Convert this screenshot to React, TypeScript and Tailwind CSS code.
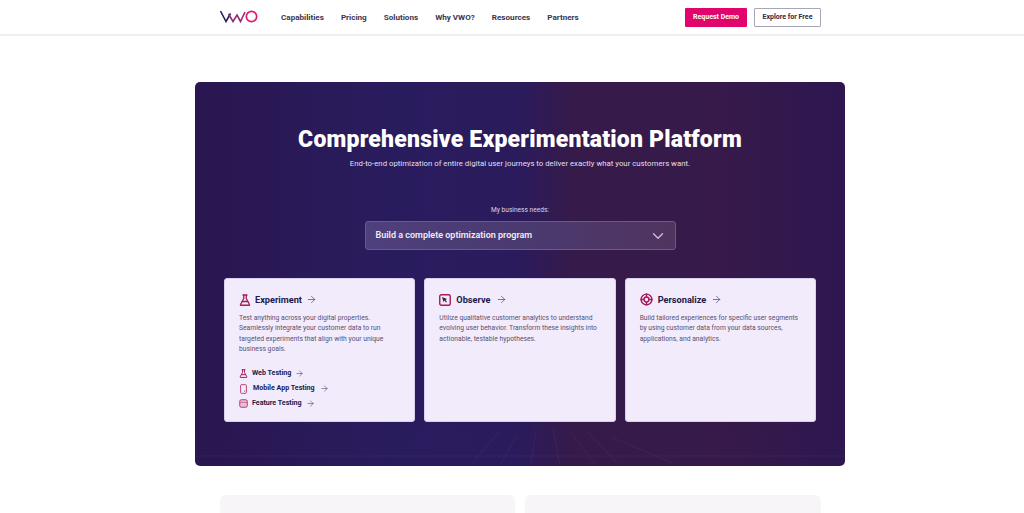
import React from 'react';
import { ArrowRight, ChevronDown } from 'lucide-react';

const navItems = ['Capabilities', 'Pricing', 'Solutions', 'Why VWO?', 'Resources', 'Partners'];

const Flask = ({ size = 12 }: { size?: number }) => (
  <svg width={size} height={size} viewBox="0 0 24 24" fill="none" stroke="#a51c5c" strokeWidth="2.6" strokeLinejoin="round" strokeLinecap="round">
    <path d="M8 2h8M9.500 2v7L3 21a1 1 0 0 0 1 1.500h16a1 1 0 0 0 1-1.500L14.500 9V2" />
    <path d="M6.500 15h11" />
  </svg>
);

const ObserveIcon = () => (
  <svg width="12" height="12" viewBox="0 0 24 24" fill="#f6e9f2" stroke="#a51c5c" strokeWidth="2.800">
    <rect x="1.500" y="1.500" width="21" height="21" rx="3" />
    <path d="M6 6l10 4-3 2 3 4-2 1-3-4-2 3z" fill="#3b1c5c" stroke="none" />
  </svg>
);

const PersonalizeIcon = () => (
  <svg width="13" height="13" viewBox="0 0 24 24" fill="none" stroke="#a51c5c" strokeWidth="2.600">
    <circle cx="12" cy="12" r="10" />
    <circle cx="12" cy="12" r="4.500" />
    <path d="M12 1v7M12 16v7M1 12h7M16 12h7" />
  </svg>
);

const PhoneIcon = () => (
  <svg width="9" height="10" viewBox="0 0 18 24" fill="none" stroke="#b8386f" strokeWidth="2.200">
    <rect x="2" y="1.500" width="14" height="21" rx="2.500" />
    <path d="M11 17h2" stroke="#3b1c5c" />
  </svg>
);

const FeatureIcon = () => (
  <svg width="9" height="9" viewBox="0 0 24 24" fill="#e3c3d8" stroke="#b8386f" strokeWidth="2.600">
    <rect x="2" y="2" width="20" height="20" rx="4" />
    <path d="M2 9h20" strokeWidth="1.600" />
  </svg>
);

const Card = ({ icon, title, gap, text, children }: { icon: React.ReactNode; title: string; gap: string; text: string[]; children?: React.ReactNode }) => (
  <div className="h-[144px] rounded-[3px] bg-[#f1ebfc] border border-[#d9cfee] pl-[14px] pt-[14px]">
    <div className={`flex items-center h-[13px] ${gap}`}>
      {icon}
      <span className="text-[9.200px] font-bold text-[#221a4a]">{title}</span>
      <ArrowRight size={11} strokeWidth={1.400} className="text-[#3c3460]" />
    </div>
    <div className="mt-[7px] text-[6.750px] leading-[10.300px] text-[#5a5070]">
      {text.map((line) => (
        <div key={line} className="whitespace-nowrap">{line}</div>
      ))}
    </div>
    {children}
  </div>
);

const SubLink = ({ icon, label, gap }: { icon: React.ReactNode; label: string; gap: string }) => (
  <div className={`flex items-center h-[15px] ${gap}`}>
    <span className="w-[9px] flex justify-center">{icon}</span>
    <span className="text-[7.100px] font-bold text-[#221a4a] whitespace-nowrap">{label}</span>
    <ArrowRight size={9} strokeWidth={1.400} className="text-[#3c3460]" />
  </div>
);

export default function App() {
  return (
    <div className="h-[513px] overflow-hidden bg-white font-['Roboto','Noto_Sans',sans-serif]">
      <header className="h-[36px] border-b-2 border-[#efefef] bg-white">
        <div className="w-[601px] ml-[220px] h-full flex items-center">
          <svg width="38" height="13" viewBox="0 0 38 13" fill="none" strokeWidth="1.600" className="-mt-[2px]">
            <path d="M0.500 1L6 11.500L10.500 3.500" stroke="#2b1d5c" />
            <path d="M8.500 4L13 11.500L17 5L20.500 11.500L25 2" stroke="#8d2a72" />
            <circle cx="31.500" cy="6.500" r="5.200" stroke="#e01a76" strokeWidth="1.700" />
          </svg>
          <nav className="flex ml-[23px] gap-[17px] text-[8.100px] font-bold text-[#3a3650]">
            {navItems.map((item) => (
              <span key={item} className="whitespace-nowrap">{item}</span>
            ))}
          </nav>
          <div className="ml-auto flex items-center gap-[7px]">
            <div className="w-[62px] h-[19px] rounded-[1px] bg-[#e2046d] text-white text-[7px] font-bold flex items-center justify-center whitespace-nowrap">Request Demo</div>
            <div className="w-[67px] h-[19px] rounded-[1px] border border-[#a7a5b8] text-[#2c2848] text-[7px] font-bold flex items-center justify-center whitespace-nowrap">Explore for Free</div>
          </div>
        </div>
      </header>

      <main className="pt-[46px] flex flex-col items-center">
        <section className="relative w-[650px] h-[384px] ml-[16px] rounded-[5px] overflow-hidden bg-[linear-gradient(90deg,#2a1650_0%,#291c5e_30%,#2b1b5c_50%,#361a4a_58%,#371a4a_80%,#2e1650_100%)]">
          <svg className="absolute left-0 bottom-0" width="650" height="50" viewBox="0 0 650 50" fill="none" stroke="#ffffff" strokeOpacity="0.09" strokeWidth="0.500">
            <path d="M0 40h650" />
            <path d="M0 24h280M0 32h240M430 24h220M470 32h180" strokeOpacity="0.03" />
            <path d="M305 15L277 47M322 19L305 49M341 15L335 51M358 12L365 49M375 15L401 50M392 15L422 47M416 21L478 47" />
          </svg>
          <div className="relative flex flex-col items-center">
            <h1 className="mt-[44px] text-[23px] leading-[28px] font-black tracking-[0.2px] text-white whitespace-nowrap">Comprehensive Experimentation Platform</h1>
            <p className="mt-[4px] text-[7.800px] leading-[12px] text-[#e4dff0] whitespace-nowrap">End-to-end optimization of entire digital user journeys to deliver exactly what your customers want.</p>
            <p className="mt-[35px] text-[6.600px] leading-[10px] text-[#dcd6ea]">My business needs:</p>
            <div className="mt-[6px] w-[311px] h-[29px] rounded-[3px] border border-[#6a5a88] bg-[linear-gradient(90deg,#4f3f7c,#4a3a70_50%,#50345f)] flex items-center justify-between pl-[10px] pr-[8px]">
              <span className="text-[9px] font-semibold text-[#f0ecf7] whitespace-nowrap">Build a complete optimization program</span>
              <ChevronDown size={18} strokeWidth={1.800} className="text-[#c8c0d6]" />
            </div>
            <div className="mt-[28px] w-[592px] grid grid-cols-3 gap-x-[9px]">
              <Card
                icon={<Flask />}
                title="Experiment"
                gap="gap-[4px]"
                text={[
                  'Test anything across your digital properties.',
                  'Seamlessly integrate your customer data to run',
                  'targeted experiments that align with your unique',
                  'business goals.',
                ]}
              >
                <div className="mt-[12px]">
                  <SubLink icon={<Flask size={9} />} label="Web Testing" gap="gap-[4px]" />
                  <SubLink icon={<PhoneIcon />} label="Mobile App Testing" gap="gap-[5px]" />
                  <SubLink icon={<FeatureIcon />} label="Feature Testing" gap="gap-[4px]" />
                </div>
              </Card>
              <Card
                icon={<ObserveIcon />}
                title="Observe"
                gap="gap-[5px]"
                text={[
                  'Utilize qualitative customer analytics to understand',
                  'evolving user behavior. Transform these insights into',
                  'actionable, testable hypotheses.',
                ]}
              />
              <Card
                icon={<PersonalizeIcon />}
                title="Personalize"
                gap="gap-[5px]"
                text={[
                  'Build tailored experiences for specific user segments',
                  'by using customer data from your data sources,',
                  'applications, and analytics.',
                ]}
              />
            </div>
          </div>
        </section>

        <div className="mt-[29px] w-[601px] ml-[17px] grid grid-cols-[295px_296px] gap-[10px]">
          <div className="h-[40px] rounded-t-[6px] bg-[#f7f5f7]" />
          <div className="h-[40px] rounded-t-[6px] bg-[#f7f5f7]" />
        </div>
      </main>
    </div>
  );
}
